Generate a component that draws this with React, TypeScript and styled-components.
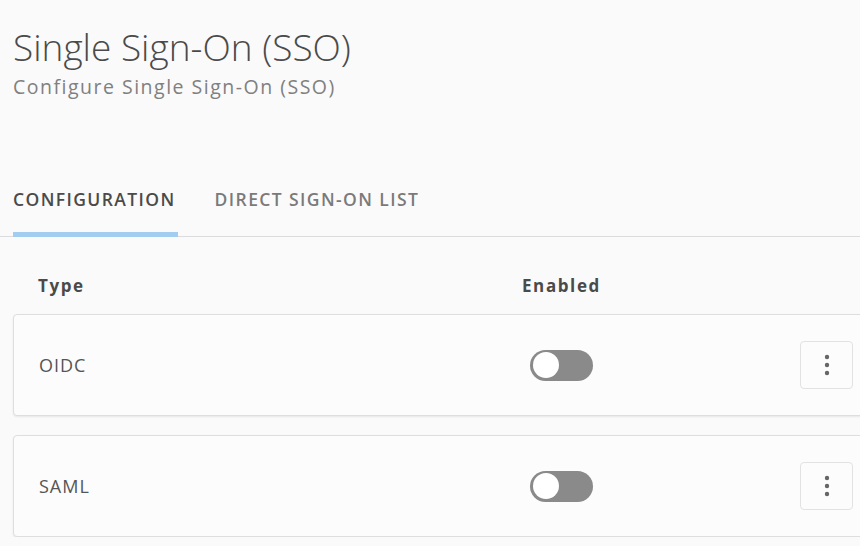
import React, {useState} from "react";
import styled, {createGlobalStyle} from "styled-components";

const GlobalStyle = createGlobalStyle`
  html, body {
    margin: 0;
    padding: 0;
    background: #fafafa;
    overflow: hidden;
  }
  body {
    font-family: "Open Sans", "Noto Sans", sans-serif;
    color: #444;
  }
`;

const providers = [
  {id: "oidc", name: "OIDC"},
  {id: "saml", name: "SAML"},
];

function App() {
  const [enabled, setEnabled] = useState<{[key: string]: boolean}>({
    oidc: false,
    saml: false,
  });

  const toggle = (id: string) => {
    setEnabled({...enabled, [id]: !enabled[id]});
  };

  return (
    <Wrap>
      <GlobalStyle />
      <Title>Single Sign-On (SSO)</Title>
      <Subtitle>Configure Single Sign-On (SSO)</Subtitle>
      <Tabs>
        <Tab active>CONFIGURATION</Tab>
        <Tab>DIRECT SIGN-ON LIST</Tab>
      </Tabs>
      <HeadRow>
        <HeadCell>Type</HeadCell>
        <HeadCell>Enabled</HeadCell>
      </HeadRow>
      <List>
        {providers.map((item) => (
          <Card key={item.id}>
            <TypeName>{item.name}</TypeName>
            <Switch on={enabled[item.id]} onClick={() => toggle(item.id)}>
              <Knob on={enabled[item.id]} />
            </Switch>
            <MenuButton>
              <svg width="6" height="22" viewBox="0 0 6 22">
                <circle cx="3" cy="3" r="2.2" fill="#666" />
                <circle cx="3" cy="11" r="2.2" fill="#666" />
                <circle cx="3" cy="19" r="2.2" fill="#666" />
              </svg>
            </MenuButton>
          </Card>
        ))}
      </List>
    </Wrap>
  );
}

export default App;

const Wrap = styled.div`
  width: 900px;
  padding: 24px 0 0 13px;
`;
const Title = styled.h1`
  margin: 0;
  font-size: 37px;
  font-weight: 300;
  line-height: 46px;
  color: #4a4a4a;
`;
const Subtitle = styled.div`
  margin-top: 5px;
  font-size: 19.5px;
  line-height: 24px;
  letter-spacing: 1.5px;
  color: #808080;
`;
const Tabs = styled.div`
  display: flex;
  gap: 37px;
  margin-top: 88px;
  margin-left: -13px;
  padding-left: 13px;
  border-bottom: 1px solid #dcdcdc;
`;
const Tab = styled.div<{active?: boolean}>`
  padding: 0 2px 21px 0;
  font-size: 17.5px;
  font-weight: 600;
  letter-spacing: 1.4px;
  color: ${(p) => (p.active ? "#4a4a4a" : "#7a7a7a")};
  border-bottom: 5px solid ${(p) => (p.active ? "#a3cdf0" : "transparent")};
  margin-bottom: -1px;
`;
const HeadRow = styled.div`
  display: grid;
  grid-template-columns: 484px 1fr;
  padding: 37px 25px 17px;
`;
const HeadCell = styled.div`
  font-size: 17px;
  font-weight: 700;
  letter-spacing: 1.6px;
  color: #4a4a4a;
`;
const List = styled.div`
  display: flex;
  flex-direction: column;
  gap: 19px;
`;
const Card = styled.div`
  display: grid;
  grid-template-columns: 491px 270px 53px;
  align-items: center;
  height: 100px;
  padding: 0 25px;
  background: #fcfcfc;
  border: 1px solid #dedede;
  border-radius: 4px;
  box-shadow: 0 1px 2px rgba(0, 0, 0, 0.08);
`;
const TypeName = styled.div`
  font-size: 18px;
  letter-spacing: 1px;
  color: #555;
`;
const Switch = styled.div<{on?: boolean}>`
  width: 63px;
  height: 31px;
  border-radius: 16px;
  background: ${(p) => (p.on ? "#5aa7e6" : "#8a8a8a")};
  display: flex;
  align-items: center;
  padding: 0 3px;
  box-sizing: border-box;
  justify-content: ${(p) => (p.on ? "flex-end" : "flex-start")};
  cursor: pointer;
`;
const Knob = styled.div<{on?: boolean}>`
  width: 26px;
  height: 26px;
  border-radius: 50%;
  background: #fff;
`;
const MenuButton = styled.button`
  width: 53px;
  height: 48px;
  display: flex;
  align-items: center;
  justify-content: center;
  background: #fcfcfc;
  border: 1px solid #e2e2e2;
  border-radius: 4px;
  padding: 0;
  cursor: pointer;
`;
